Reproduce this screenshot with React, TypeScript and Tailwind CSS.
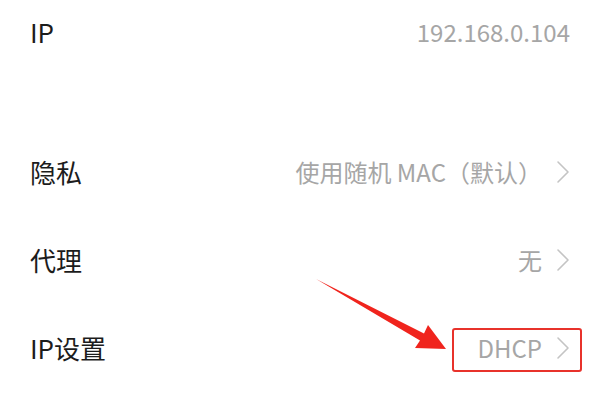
import React from "react";

const font = { fontFamily: '"Noto Sans CJK SC", "Noto Sans", sans-serif' };

function Chevron() {
  return (
    <svg width="14" height="24" viewBox="0 0 14 24" className="ml-[14px] shrink-0">
      <path d="M2 2 L12 12 L2 22" fill="none" stroke="#c4c4c4" strokeWidth="1.6" strokeLinejoin="round" strokeLinecap="round" />
    </svg>
  );
}

function Row({ label, value, chevron = true, boxed = false }: { label: string; value: string; chevron?: boolean; boxed?: boolean }) {
  const inner = (
    <div className="flex items-center">
      <span className="text-[24px] text-[#a6a6a6] leading-none">{value}</span>
      {chevron && <Chevron />}
    </div>
  );
  return (
    <div className="flex h-[88px] items-center justify-between px-[30px]">
      <span className="text-[26px] text-[#1c1c1c] leading-none">{label}</span>
      {boxed ? (
        <div className="-mr-[12px] mt-[4px] rounded-[3px] border-2 border-[#e8322b] pl-[24px] pr-[10px] pt-[6px] pb-[10px]">{inner}</div>
      ) : (
        inner
      )}
    </div>
  );
}

export default function App() {
  return (
    <div className="relative h-[418px] w-[600px] overflow-hidden bg-white" style={font}>
      <div className="flex h-[64px] items-center justify-between px-[30px]">
        <span className="text-[26px] text-[#1c1c1c] leading-none">IP</span>
        <span className="text-[24px] text-[#a6a6a6] leading-none">192.168.0.104</span>
      </div>
      <div className="mt-[64px] flex flex-col">
        <Row label="隐私" value="使用随机 MAC（默认）" />
        <Row label="代理" value="无" />
        <Row label="IP设置" value="DHCP" boxed />
      </div>

      {/* annotation arrow */}
      <svg className="pointer-events-none absolute left-0 top-0" width="600" height="418">
        <polygon points="316,279 424,333.5 428,325 446,349 415,348 420,340.5" fill="#f0241d" />
      </svg>
    </div>
  );
}
